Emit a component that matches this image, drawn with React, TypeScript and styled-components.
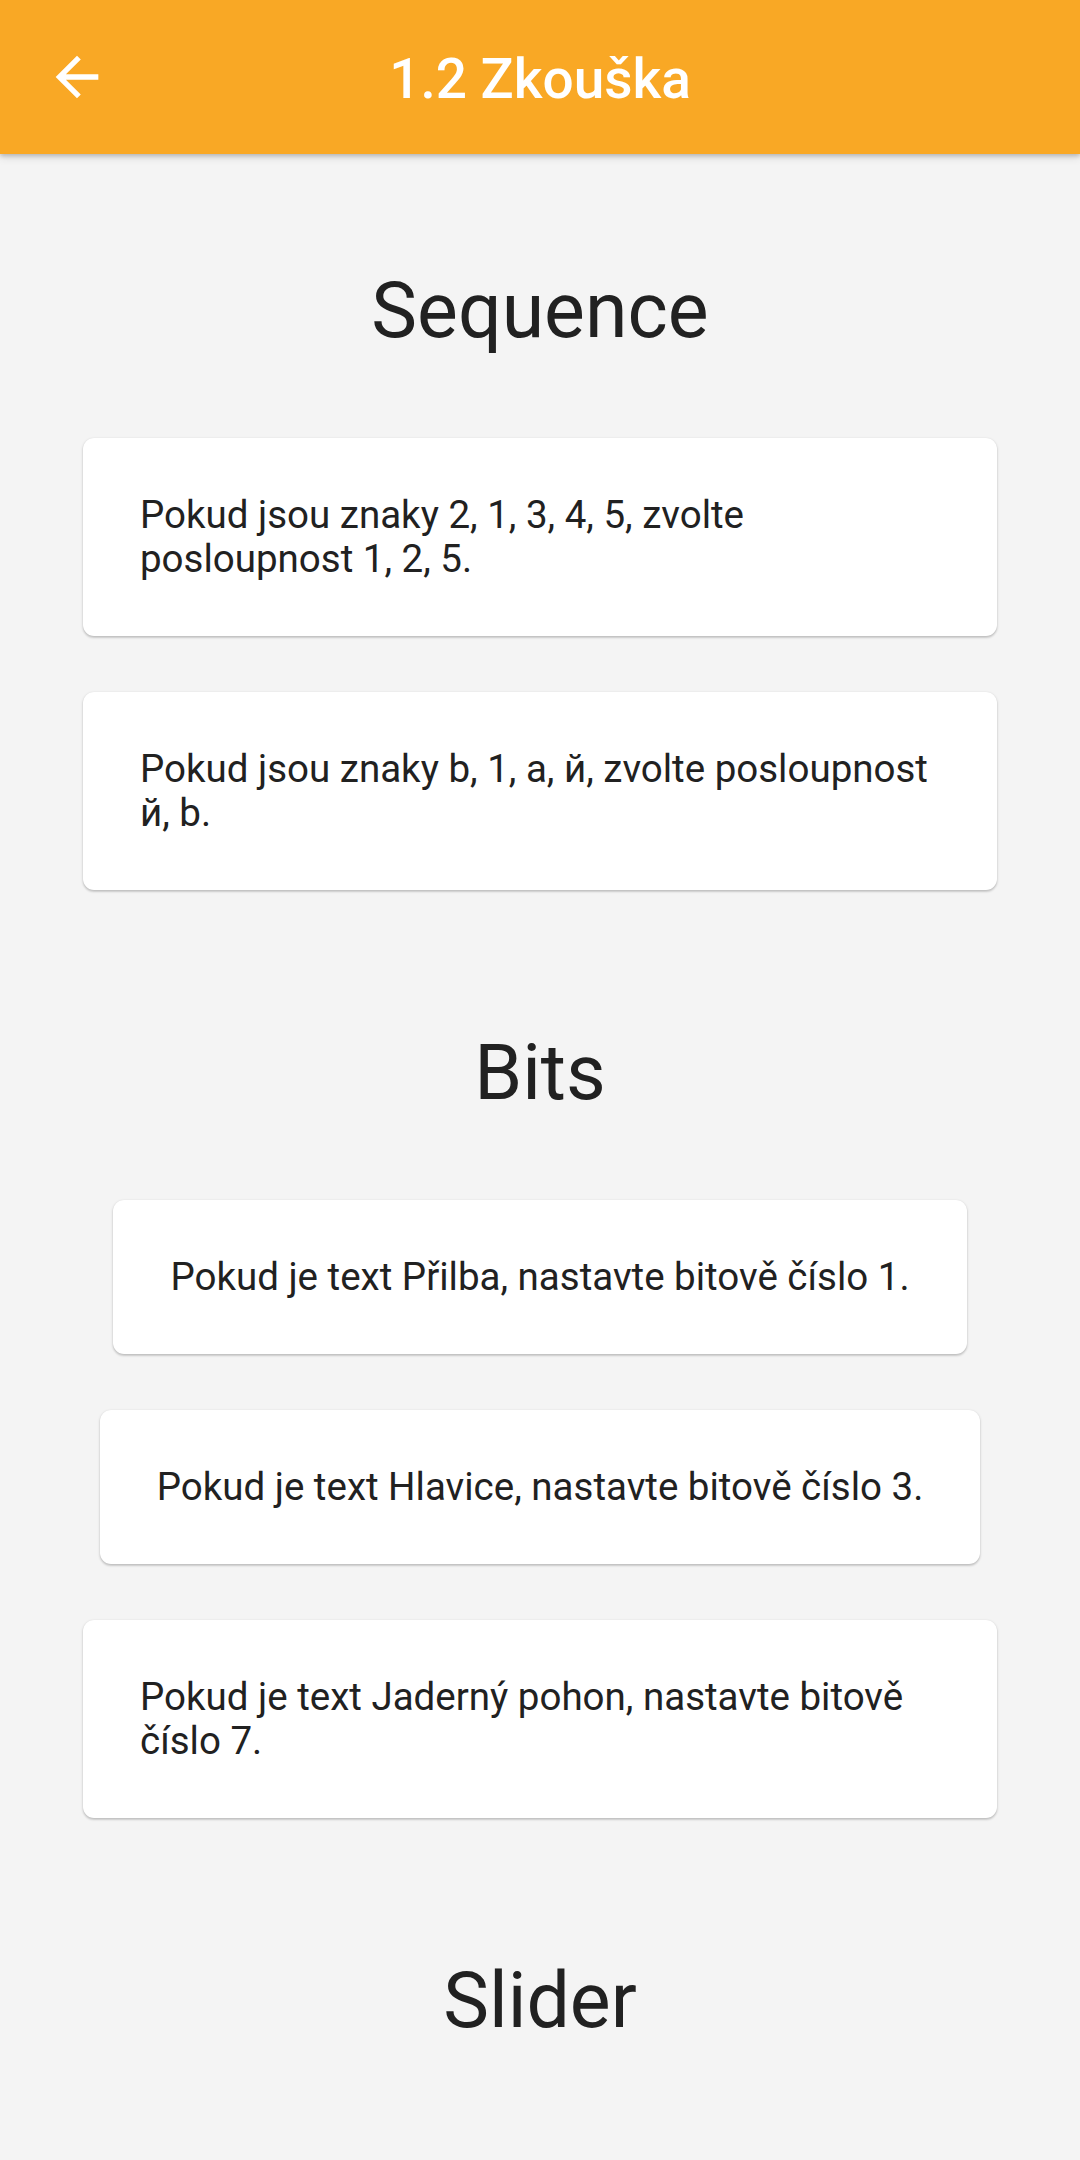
import React from "react";
import styled, { createGlobalStyle } from "styled-components";

const GlobalStyle = createGlobalStyle`
  html, body {
    margin: 0;
    padding: 0;
    background: #f4f4f4;
    font-family: Roboto, "Noto Sans", "Liberation Sans", sans-serif;
  }
  * { box-sizing: border-box; }
`;

const Screen = styled.div`
  min-height: 2160px;
  background: #f4f4f4;
  display: flex;
  flex-direction: column;
`;

const AppBar = styled.header`
  position: relative;
  z-index: 2;
  height: 154px;
  background: #f9a825;
  display: grid;
  grid-template-columns: 154px 1fr 154px;
  align-items: center;
  box-shadow: 0 2px 4px rgba(0, 0, 0, 0.18), 0 4px 8px rgba(0, 0, 0, 0.1);
`;

const BackButton = styled.button`
  width: 154px;
  height: 154px;
  border: 0;
  padding: 0;
  background: transparent;
  display: flex;
  align-items: center;
  justify-content: center;
  color: #ffffff;
  cursor: pointer;
`;

const Title = styled.h1`
  margin: 0;
  text-align: center;
  color: #ffffff;
  font-family: Roboto, "Noto Sans", sans-serif;
  font-weight: 500;
  font-size: 55px;
  line-height: 64px;
  padding-top: 4px;
`;

const Content = styled.main`
  display: flex;
  flex-direction: column;
  gap: 138px;
  padding: 112px 83px 0;
`;

const Section = styled.section`
  display: flex;
  flex-direction: column;
  align-items: center;
`;

const Heading = styled.h2`
  margin: 0 0 82px;
  font-family: Roboto, "Noto Sans", sans-serif;
  font-weight: 400;
  font-size: 77px;
  line-height: 90px;
  color: #212121;
  text-align: center;
`;

const CardList = styled.div`
  display: flex;
  flex-direction: column;
  align-items: center;
  gap: 56px;
  width: 100%;
`;

const Card = styled.div`
  max-width: 100%;
  background: #ffffff;
  border-radius: 11px;
  padding: 55px 57px;
  box-shadow: 0 1px 3px rgba(0, 0, 0, 0.16), 0 2px 2px rgba(0, 0, 0, 0.1),
    0 0 1px rgba(0, 0, 0, 0.08);
  font-family: Roboto, "Noto Sans", sans-serif;
  font-size: 38.5px;
  line-height: 44px;
  color: #212121;
`;

const BackIcon = () => (
  <svg width="64" height="64" viewBox="0 0 24 24" aria-hidden="true">
    <path
      fill="currentColor"
      d="M20 11H7.83l5.59-5.59L12 4l-8 8 8 8 1.41-1.41L7.83 13H20v-2z"
    />
  </svg>
);

const sections: { title: string; items: string[] }[] = [
  {
    title: "Sequence",
    items: [
      "Pokud jsou znaky 2, 1, 3, 4, 5, zvolte posloupnost 1, 2, 5.",
      "Pokud jsou znaky b, 1, a, й, zvolte posloupnost й, b.",
    ],
  },
  {
    title: "Bits",
    items: [
      "Pokud je text Přilba, nastavte bitově číslo 1.",
      "Pokud je text Hlavice, nastavte bitově číslo 3.",
      "Pokud je text Jaderný pohon, nastavte bitově číslo 7.",
    ],
  },
  { title: "Slider", items: [] },
];

export default function App() {
  return (
    <Screen>
      <GlobalStyle />
      <AppBar>
        <BackButton aria-label="Zpět">
          <BackIcon />
        </BackButton>
        <Title>1.2 Zkouška</Title>
        <span />
      </AppBar>
      <Content>
        {sections.map((s) => (
          <Section key={s.title}>
            <Heading>{s.title}</Heading>
            {s.items.length > 0 && (
              <CardList>
                {s.items.map((t) => (
                  <Card key={t}>{t}</Card>
                ))}
              </CardList>
            )}
          </Section>
        ))}
      </Content>
    </Screen>
  );
}
